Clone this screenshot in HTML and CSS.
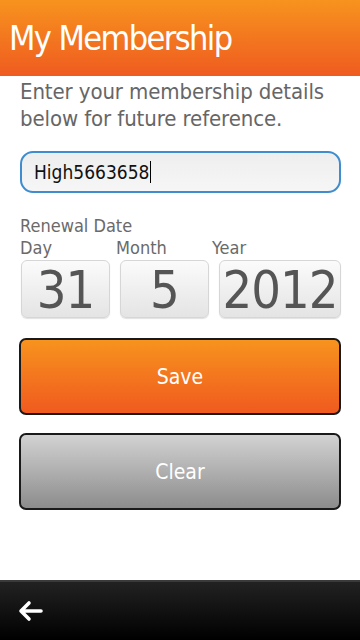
FILE: index.html
```html
<!DOCTYPE html>
<html>
<head>
<meta charset="utf-8">
<link rel="stylesheet" href="styles.css">
</head>
<body>
<div class="screen">
  <header class="titlebar">My Membership</header>
  <main class="content">
    <p class="intro">Enter your membership details below for future reference.</p>
    <div class="field"><span class="field-text">High5663658</span><span class="caret"></span></div>
    <div class="label title-label">Renewal Date</div>
    <div class="label-row">
      <div class="label">Day</div>
      <div class="label">Month</div>
      <div class="label">Year</div>
    </div>
    <div class="date-row">
      <div class="date-box day">31</div>
      <div class="date-box month">5</div>
      <div class="date-box year">2012</div>
    </div>
    <div class="btn btn-save">Save</div>
    <div class="btn btn-clear">Clear</div>
  </main>
  <footer class="toolbar">
    <svg class="back" width="26" height="22" viewBox="0 0 26 22">
      <path d="M24 11 H4 M12 3 L4 11 L12 19" fill="none" stroke="#fff" stroke-width="3.6" stroke-linecap="round" stroke-linejoin="round"/>
    </svg>
  </footer>
</div>
</body>
</html>
```

FILE: styles.css
```css
* { box-sizing: border-box; }
html, body { margin: 0; padding: 0; }
body {
  width: 360px;
  height: 640px;
  background: #fff;
  font-family: "DejaVu Sans Condensed", "DejaVu Sans", sans-serif;
  overflow: hidden;
}
.screen {
  width: 360px;
  height: 640px;
  display: flex;
  flex-direction: column;
}
.titlebar {
  height: 76px;
  flex: none;
  background: linear-gradient(#f7931e, #ef5b20);
  color: #fff;
  font-size: 34px;
  line-height: 76px;
  padding-left: 9px;
  letter-spacing: -1.6px;
}
.content {
  flex: 1;
  padding: 0 19px 0 19px;
}
.intro {
  margin: 2px 0 0 1px;
  color: #666;
  font-size: 22px;
  line-height: 27px;
  letter-spacing: -0.1px;
}
.field {
  margin: 19px 0 0 1px;
  height: 42px;
  border: 2px solid #3f8ccf;
  border-radius: 13px;
  background: linear-gradient(#eeeeee, #f6f6f6);
  display: flex;
  align-items: center;
  padding-left: 12px;
  font-size: 19px;
  color: #111;
}
.caret {
  display: inline-block;
  width: 1px;
  height: 22px;
  background: #000;
  margin-left: 1px;
}
.label {
  color: #6a6a6a;
  font-size: 18px;
  line-height: 22px;
}
.title-label { margin: 22px 0 0 1px; }
.label-row {
  display: grid;
  grid-template-columns: 96px 96px 1fr;
  margin-left: 1px;
}
.date-row {
  display: flex;
  gap: 10px;
  margin: 1px 0 0 2px;
}
.date-box.day, .date-box.month { width: 89px; }
.date-box.year { flex: 1; }
.date-box {
  height: 58px;
  border: 1px solid #d6d6d6;
  border-radius: 6px;
  background: linear-gradient(#fbfbfb, #e4e4e4);
  color: #555;
  font-size: 52px;
  line-height: 58px;
  text-align: center;
  box-shadow: 0 1px 1px rgba(0,0,0,0.12);
  letter-spacing: -1px;
}
.btn {
  height: 77px;
  border: 2px solid #1a1a1a;
  border-radius: 7px;
  color: #fff;
  font-size: 21px;
  display: flex;
  align-items: center;
  justify-content: center;
}
.btn-save {
  margin-top: 20px;
  background: linear-gradient(#f7931e, #f05a1e);
}
.btn-clear {
  margin-top: 18px;
  background: linear-gradient(#d2d2d2, #8c8c8c);
}
.toolbar {
  height: 60px;
  flex: none;
  border-top: 2px solid #3a3a3a;
  background: linear-gradient(#222, #000);
  display: flex;
  align-items: center;
  padding-left: 17px;
}
```
